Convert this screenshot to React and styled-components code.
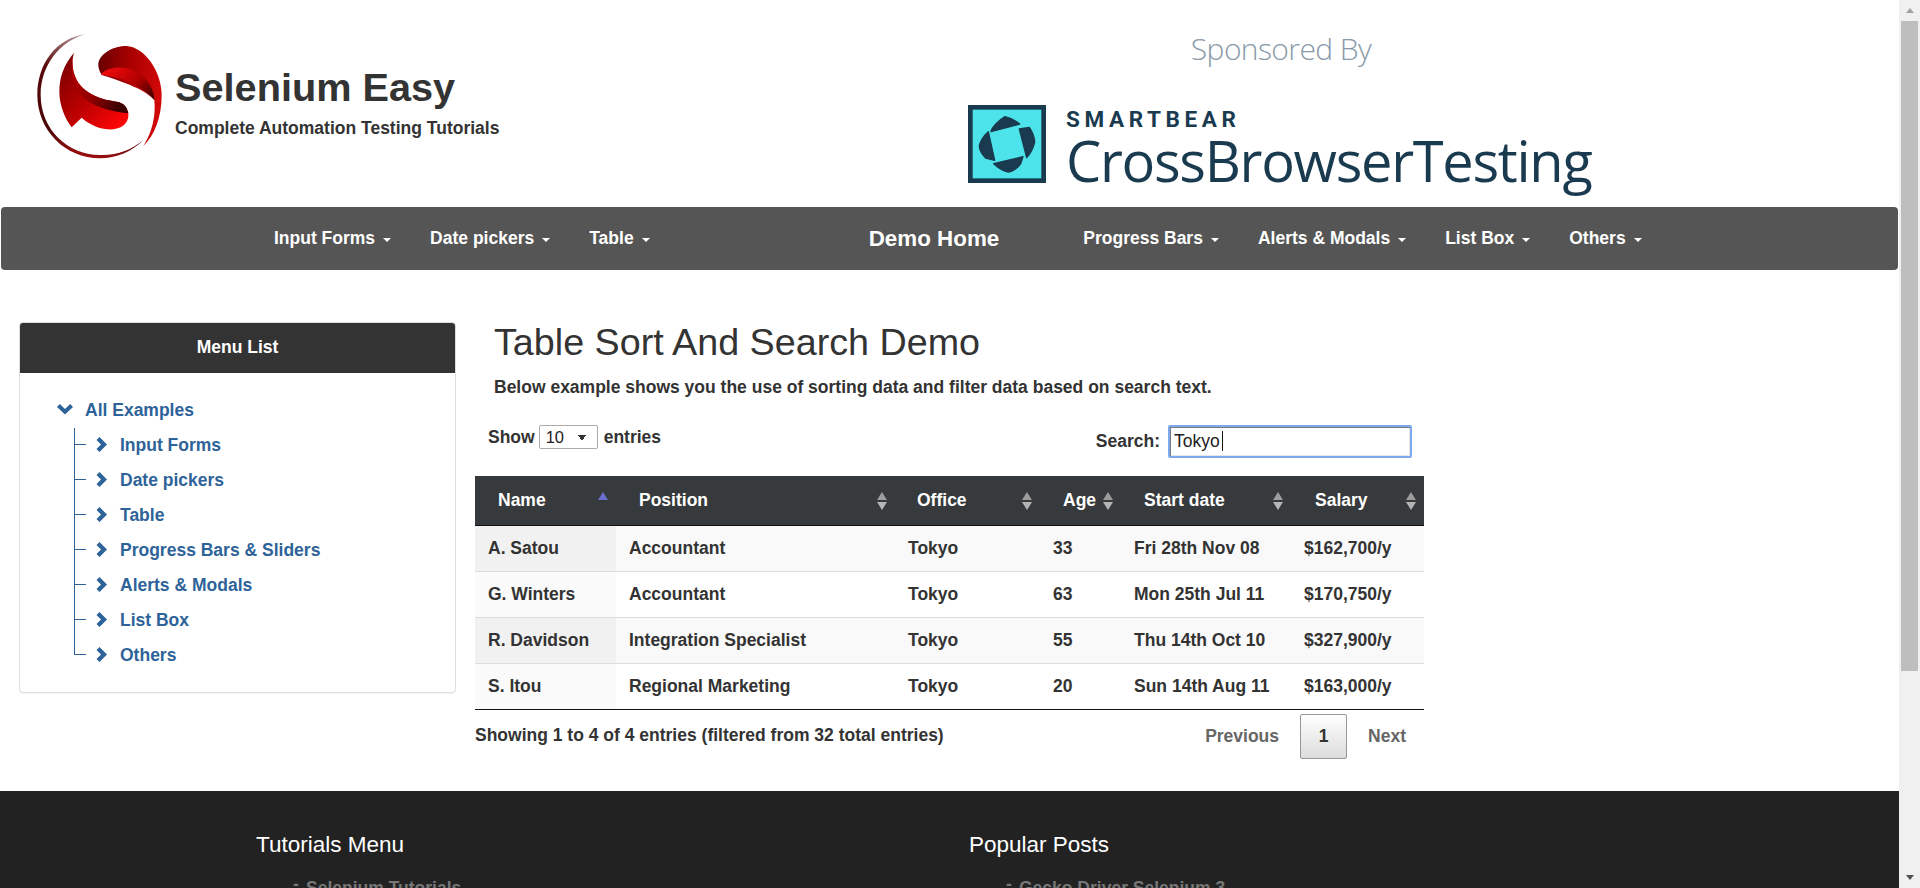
import styled, { createGlobalStyle } from "styled-components";

const GlobalStyle = createGlobalStyle`
  body {
    margin: 0;
    font-family: "Liberation Sans", Arial, sans-serif;
    font-size: 17.5px;
    font-weight: 700;
    color: #333;
    background: #fff;
  }
  #root {
    padding-right: 21px;
  }
  * {
    box-sizing: border-box;
  }
`;

const ScrollBar = styled.div`
  position: fixed;
  top: 0;
  right: 0;
  bottom: 0;
  display: flex;
  flex-direction: column;
  justify-content: space-between;
  width: 21px;
  background: #f0f0f0;
`;

const ScrollArrow = styled.div`
  display: flex;
  align-items: center;
  justify-content: center;
  height: 21px;
  &::before {
    content: "";
    border-left: 4.5px solid transparent;
    border-right: 4.5px solid transparent;
    border-top: ${(p) => (p.$down ? "5px solid #505050" : "none")};
    border-bottom: ${(p) => (p.$down ? "none" : "5px solid #a3a3a3")};
  }
`;

const ScrollTrack = styled.div`
  flex: 1;
  padding: 0 2px;
`;

const ScrollThumb = styled.div`
  height: 650px;
  background: #bebebe;
`;

const Header = styled.header`
  display: flex;
  height: 207px;
`;

const Brand = styled.div`
  display: flex;
  width: 950px;
  padding: 30px 0 0 30px;
`;

const BrandText = styled.div`
  padding: 35px 0 0 11px;
  h1 {
    margin: 0;
    font-size: 39.7px;
    line-height: 44px;
    color: #333;
  }
  p {
    margin: 9px 0 0;
    line-height: 20px;
  }
`;

const Sponsor = styled.div`
  flex: 1;
  padding-left: 18px;
`;

const SponsorTitle = styled.div`
  width: 626px;
  padding-top: 29px;
  text-align: center;
  font-family: "Open Sans", sans-serif;
  font-size: 30px;
  font-weight: 300;
  line-height: 40px;
  color: #8a9aa8;
  letter-spacing: -0.6px;
`;

const SponsorLogo = styled.div`
  display: flex;
  margin-top: 36px;
  color: #1a3a4f;
`;

const LogoWords = styled.div`
  padding: 2px 0 0 20px;
`;

const LogoCompany = styled.div`
  font-family: "Roboto", sans-serif;
  font-size: 22.5px;
  font-weight: 700;
  letter-spacing: 4.6px;
  line-height: 24px;
`;

const LogoProduct = styled.div`
  font-family: "Open Sans", sans-serif;
  font-size: 56px;
  font-weight: 400;
  line-height: 58px;
  letter-spacing: -1.3px;
`;

const NavBar = styled.nav`
  display: flex;
  align-items: center;
  height: 63px;
  margin: 0 1px;
  padding-left: 258px;
  background: #555;
  border-radius: 4px;
  color: #fff;
`;

const NavItem = styled.a`
  display: flex;
  align-items: center;
  margin-right: 9px;
  padding: 0 15px;
  color: #fff;
  &::after {
    content: "";
    margin: 2px 0 0 8px;
    border-top: 4px solid #fff;
    border-left: 4px solid transparent;
    border-right: 4px solid transparent;
  }
`;

const NavBrand = styled.a`
  margin: 0 54px 0 180px;
  padding: 0 15px;
  font-size: 22.4px;
  color: #fff;
`;

const Main = styled.main`
  display: flex;
  align-items: flex-start;
  height: 521px;
  padding: 52px 0 0 19px;
`;

const SidePanel = styled.aside`
  width: 437px;
  height: 371px;
  border: 1px solid #ddd;
  border-radius: 4px;
  box-shadow: 0 1px 1px rgba(0, 0, 0, 0.05);
  overflow: hidden;
`;

const SideHeading = styled.div`
  height: 50px;
  background: #333;
  color: #fff;
  text-align: center;
  line-height: 49px;
`;

const Tree = styled.ul`
  list-style: none;
  margin: 0;
  padding: 20px 0 0 37px;
`;

const TreeRoot = styled.li`
  display: flex;
  align-items: center;
  gap: 12px;
  height: 35px;
  color: #2e6399;
  svg {
    margin-top: -3px;
  }
`;

const Branch = styled.ul`
  list-style: none;
  margin: 0 0 0 17px;
  padding: 0;
`;

const Leaf = styled.li`
  position: relative;
  display: flex;
  align-items: center;
  gap: 12px;
  height: 35px;
  padding-left: 22px;
  color: #2e6399;
  svg {
    margin-top: -2px;
  }
  &::before {
    content: "";
    position: absolute;
    left: 0;
    top: 0;
    bottom: ${(p) => (p.$last ? "18px" : "0")};
    border-left: 1px solid #2e6399;
  }
  &::after {
    content: "";
    position: absolute;
    left: 0;
    top: 16px;
    width: 12px;
    border-top: 1px solid #2e6399;
  }
`;

const Content = styled.section`
  width: 949px;
  margin-left: 19px;
`;

const Title = styled.h2`
  margin: 0;
  padding-left: 19px;
  font-size: 37.7px;
  font-weight: 400;
  line-height: 40px;
  color: #333;
`;

const Lead = styled.p`
  margin: 14px 0 0;
  padding-left: 19px;
  line-height: 22px;
`;

const Controls = styled.div`
  display: flex;
  justify-content: space-between;
  height: 51px;
  margin-top: 27px;
`;

const ShowEntries = styled.label`
  display: flex;
  align-items: center;
  gap: 4px;
  height: 24px;
  margin-left: 13px;
`;

const Select = styled.select`
  appearance: none;
  width: 59px;
  height: 24px;
  margin-right: 2px;
  padding-left: 6px;
  font: 400 16.5px "Liberation Sans", sans-serif;
  color: #222;
  border: 1px solid #aaa;
  border-radius: 2px;
  background-color: #fff;
  background-image: linear-gradient(to top right, transparent 50%, #333 50%),
    linear-gradient(to top left, transparent 50%, #333 50%);
  background-size: 4px 6px, 4px 6px;
  background-position: 38px 9px, 42px 9px;
  background-repeat: no-repeat;
`;

const SearchLabel = styled.label`
  display: flex;
  align-items: flex-start;
  gap: 8px;
  margin-right: 12px;
  line-height: 32px;
`;

const SearchField = styled.span`
  position: relative;
  display: block;
  height: 33px;
`;

const SearchInput = styled.input`
  display: block;
  width: 244px;
  height: 33px;
  padding: 0 4px;
  font: 400 17.5px "Liberation Sans", sans-serif;
  color: #222;
  border: 2px solid #7fa9ef;
  border-radius: 2px;
  box-shadow: inset 1px 1px 0 #7a7a7a, inset -1px -1px 0 #e6e6e6;
  outline: none;
`;

const Caret = styled.span`
  position: absolute;
  left: 54px;
  top: 6px;
  height: 20px;
  border-left: 1px solid #111;
`;

const Table = styled.table`
  width: 949px;
  border-collapse: collapse;
  table-layout: fixed;
  border-bottom: 1px solid #111;
`;

const Th = styled.th`
  position: relative;
  height: 49px;
  padding: 0 0 0 ${(p) => p.$pad}px;
  background: #373a3c;
  border-bottom: 1px solid #111;
  color: #fff;
  text-align: left;
  font-size: 17.5px;
`;

const SortMark = styled.span`
  position: absolute;
  right: 7px;
  top: 15px;
  width: 11px;
  height: 19px;
  &::before {
    content: "";
    position: absolute;
    top: 1px;
    left: 0;
    border-bottom: 8px solid ${(p) => (p.$asc ? "#6b6fd0" : "#9c9c9c")};
    border-left: 5.5px solid transparent;
    border-right: 5.5px solid transparent;
  }
  &::after {
    content: "";
    display: ${(p) => (p.$asc ? "none" : "block")};
    position: absolute;
    bottom: 0;
    left: 0;
    border-top: 8px solid #b5b5b5;
    border-left: 5.5px solid transparent;
    border-right: 5.5px solid transparent;
  }
`;

const Tr = styled.tr`
  background: ${(p) => (p.$odd ? "#f9f9f9" : "#fff")};
  td {
    height: 46px;
    padding: 0 0 0 13px;
    border-top: 1px solid #ddd;
  }
  td:first-child {
    background: ${(p) => (p.$odd ? "#f1f1f1" : "#fafafa")};
  }
`;

const TableFoot = styled.div`
  display: flex;
  justify-content: space-between;
`;

const Info = styled.div`
  padding-top: 15px;
`;

const Pager = styled.div`
  display: flex;
  align-items: flex-start;
  margin-right: -3px;
  padding-top: 4px;
  color: #666;
`;

const PageLink = styled.a`
  padding: 12px 21px 0;
  line-height: 20px;
`;

const PageCurrent = styled.a`
  width: 47px;
  height: 45px;
  text-align: center;
  line-height: 43px;
  color: #333;
  border: 1px solid #979797;
  border-radius: 2px;
  background: linear-gradient(to bottom, #fff 0%, #dcdcdc 100%);
`;

const Footer = styled.footer`
  display: flex;
  height: 365px;
  padding: 40px 0 0 256px;
  background: #222;
  color: #fff;
`;

const FooterColumn = styled.div`
  width: 713px;
  h4 {
    margin: 0;
    font-size: 22.5px;
    font-weight: 400;
    line-height: 28px;
  }
  ul {
    margin: 12px 0 0;
    padding-left: 50px;
    color: #777;
    list-style: none;
  }
  li {
    position: relative;
    line-height: 34px;
  }
  li::before {
    content: "-";
    position: absolute;
    left: -13px;
    top: -4px;
  }
`;

const Chevron = ({ down }) =>
  down ? (
    <svg width="16" height="11" viewBox="0 0 16 11" aria-hidden="true">
      <path d="M0 3 L2.8 0 L8 5 L13.2 0 L16 3 L8 10.5 Z" fill="#2e6399" />
    </svg>
  ) : (
    <svg width="12" height="15" viewBox="0 0 12 15" aria-hidden="true">
      <path d="M3.5 0 L0.5 3 L5 7.5 L0.5 12 L3.5 15 L11 7.5 Z" fill="#2e6399" />
    </svg>
  );

const SeleniumLogo = () => (
  <svg width="134" height="134" viewBox="30 30 402 402" aria-hidden="true">
    <defs>
      <linearGradient id="ring" x1="0.6" y1="0" x2="0.5" y2="1">
        <stop offset="0" stopColor="#b89a9a" />
        <stop offset="0.3" stopColor="#5a0a0a" />
        <stop offset="0.8" stopColor="#4a0505" />
        <stop offset="1" stopColor="#a01010" />
      </linearGradient>
      <linearGradient id="blob" x1="0" y1="0" x2="1" y2="0.15">
        <stop offset="0" stopColor="#650000" />
        <stop offset="0.5" stopColor="#a80000" />
        <stop offset="1" stopColor="#d00808" />
      </linearGradient>
      <linearGradient id="fold" x1="0" y1="0.2" x2="1" y2="0.9">
        <stop offset="0" stopColor="#f00a0a" />
        <stop offset="0.55" stopColor="#b00000" />
        <stop offset="1" stopColor="#3d0000" />
      </linearGradient>
      <linearGradient id="body" x1="0" y1="0.1" x2="0.9" y2="0.95">
        <stop offset="0" stopColor="#7a0000" />
        <stop offset="0.5" stopColor="#b80000" />
        <stop offset="1" stopColor="#ff0505" />
      </linearGradient>
      <linearGradient id="bodyFold" x1="0" y1="0" x2="1" y2="0.6">
        <stop offset="0" stopColor="#c00000" />
        <stop offset="0.6" stopColor="#900000" />
        <stop offset="1" stopColor="#3d0000" />
      </linearGradient>
    </defs>
    <path
      d="M195 43 C110 55 52 130 52 225 C52 330 135 415 240 415 C290 415 335 395 370 360 C335 390 290 407 240 405 C140 405 62 325 62 225 C62 135 120 65 195 43 Z"
      fill="url(#ring)"
    />
    <path
      d="M235 130 C240 100 280 78 320 78 C370 80 425 150 425 225 C425 290 405 345 370 378 C395 340 408 290 403 240 C380 215 340 195 245 165 C238 155 234 142 235 130 Z"
      fill="url(#blob)"
    />
    <path
      d="M243 162 C270 135 330 135 370 170 C390 190 403 215 403 240 C385 215 340 190 300 176 C280 170 258 170 243 162 Z"
      fill="url(#fold)"
    />
    <path
      d="M162 98 C130 135 118 175 118 215 C118 255 135 295 155 322 L185 293 C215 320 250 330 280 328 C310 325 328 305 325 280 C322 262 312 248 290 245 C250 240 195 225 170 180 C155 150 155 120 162 98 Z"
      fill="url(#body)"
    />
    <path
      d="M162 98 C150 140 155 180 175 215 C200 255 260 270 310 278 L325 280 C322 262 312 248 290 245 C250 240 195 225 170 180 C155 150 155 120 162 98 Z"
      fill="url(#bodyFold)"
    />
  </svg>
);

const BearMark = () => (
  <svg width="78" height="78" viewBox="54 46 234 234" aria-hidden="true">
    <rect x="61" y="53" width="220" height="220" fill="#4de3ea" stroke="#1a3a4f" strokeWidth="14" />
    <g fill="#1a3a4f" stroke="#1a3a4f" strokeWidth="4" strokeLinejoin="round">
      <path d="M123 126 C125 112 150 90 165 81 C180 84 198 94 209 103 Z" />
      <path d="M208 118 L238 113 C246 125 254 145 254 158 C250 175 238 195 230 204 Z" />
      <path d="M219 201 L131 222 C142 232 162 245 175 247 C190 245 206 232 212 222 Z" />
      <path d="M134 212 L107 205 C97 195 88 180 88 168 C92 150 105 135 115 126 Z" />
    </g>
  </svg>
);

const navLeft = ["Input Forms", "Date pickers", "Table"];
const navRight = ["Progress Bars", "Alerts & Modals", "List Box", "Others"];
const treeItems = ["Input Forms", "Date pickers", "Table", "Progress Bars & Sliders", "Alerts & Modals", "List Box", "Others"];

const columns = [
  { label: "Name", width: 141, pad: 23, asc: true },
  { label: "Position", width: 279, pad: 23 },
  { label: "Office", width: 145, pad: 22 },
  { label: "Age", width: 81, pad: 23 },
  { label: "Start date", width: 170, pad: 23 },
  { label: "Salary", width: 133, pad: 24 },
];

const rows = [
  ["A. Satou", "Accountant", "Tokyo", "33", "Fri 28th Nov 08", "$162,700/y"],
  ["G. Winters", "Accountant", "Tokyo", "63", "Mon 25th Jul 11", "$170,750/y"],
  ["R. Davidson", "Integration Specialist", "Tokyo", "55", "Thu 14th Oct 10", "$327,900/y"],
  ["S. Itou", "Regional Marketing", "Tokyo", "20", "Sun 14th Aug 11", "$163,000/y"],
];

export default function App() {
  return (
    <>
      <GlobalStyle />
      <ScrollBar>
        <ScrollArrow />
        <ScrollTrack>
          <ScrollThumb />
        </ScrollTrack>
        <ScrollArrow $down />
      </ScrollBar>
      <Header>
        <Brand>
          <SeleniumLogo />
          <BrandText>
            <h1>Selenium Easy</h1>
            <p>Complete Automation Testing Tutorials</p>
          </BrandText>
        </Brand>
        <Sponsor>
          <SponsorTitle>Sponsored By</SponsorTitle>
          <SponsorLogo>
            <BearMark />
            <LogoWords>
              <LogoCompany>SMARTBEAR</LogoCompany>
              <LogoProduct>CrossBrowserTesting</LogoProduct>
            </LogoWords>
          </SponsorLogo>
        </Sponsor>
      </Header>
      <NavBar>
        {navLeft.map((item) => (
          <NavItem key={item}>{item}</NavItem>
        ))}
        <NavBrand>Demo Home</NavBrand>
        {navRight.map((item) => (
          <NavItem key={item}>{item}</NavItem>
        ))}
      </NavBar>
      <Main>
        <SidePanel>
          <SideHeading>Menu List</SideHeading>
          <Tree>
            <TreeRoot>
              <Chevron down />
              All Examples
            </TreeRoot>
            <Branch>
              {treeItems.map((item, i) => (
                <Leaf key={item} $last={i === treeItems.length - 1}>
                  <Chevron />
                  {item}
                </Leaf>
              ))}
            </Branch>
          </Tree>
        </SidePanel>
        <Content>
          <Title>Table Sort And Search Demo</Title>
          <Lead>Below example shows you the use of sorting data and filter data based on search text.</Lead>
          <Controls>
            <ShowEntries>
              Show
              <Select defaultValue="10">
                <option>10</option>
                <option>25</option>
                <option>50</option>
                <option>100</option>
              </Select>
              entries
            </ShowEntries>
            <SearchLabel>
              Search:
              <SearchField>
                <SearchInput defaultValue="Tokyo" />
                <Caret />
              </SearchField>
            </SearchLabel>
          </Controls>
          <Table>
            <colgroup>
              {columns.map((c) => (
                <col key={c.label} width={c.width} />
              ))}
            </colgroup>
            <thead>
              <tr>
                {columns.map((c) => (
                  <Th key={c.label} $pad={c.pad}>
                    {c.label}
                    <SortMark $asc={c.asc} />
                  </Th>
                ))}
              </tr>
            </thead>
            <tbody>
              {rows.map((row, i) => (
                <Tr key={row[0]} $odd={i % 2 === 0}>
                  {row.map((cell) => (
                    <td key={cell}>{cell}</td>
                  ))}
                </Tr>
              ))}
            </tbody>
          </Table>
          <TableFoot>
            <Info>Showing 1 to 4 of 4 entries (filtered from 32 total entries)</Info>
            <Pager>
              <PageLink>Previous</PageLink>
              <PageCurrent>1</PageCurrent>
              <PageLink>Next</PageLink>
            </Pager>
          </TableFoot>
        </Content>
      </Main>
      <Footer>
        <FooterColumn>
          <h4>Tutorials Menu</h4>
          <ul>
            <li>Selenium Tutorials</li>
            <li>TestNG Tutorials</li>
            <li>Java Tutorials</li>
          </ul>
        </FooterColumn>
        <FooterColumn>
          <h4>Popular Posts</h4>
          <ul>
            <li>Gecko Driver Selenium 3</li>
            <li>Selenium Grid</li>
            <li>Page Object Model</li>
          </ul>
        </FooterColumn>
      </Footer>
    </>
  );
}
